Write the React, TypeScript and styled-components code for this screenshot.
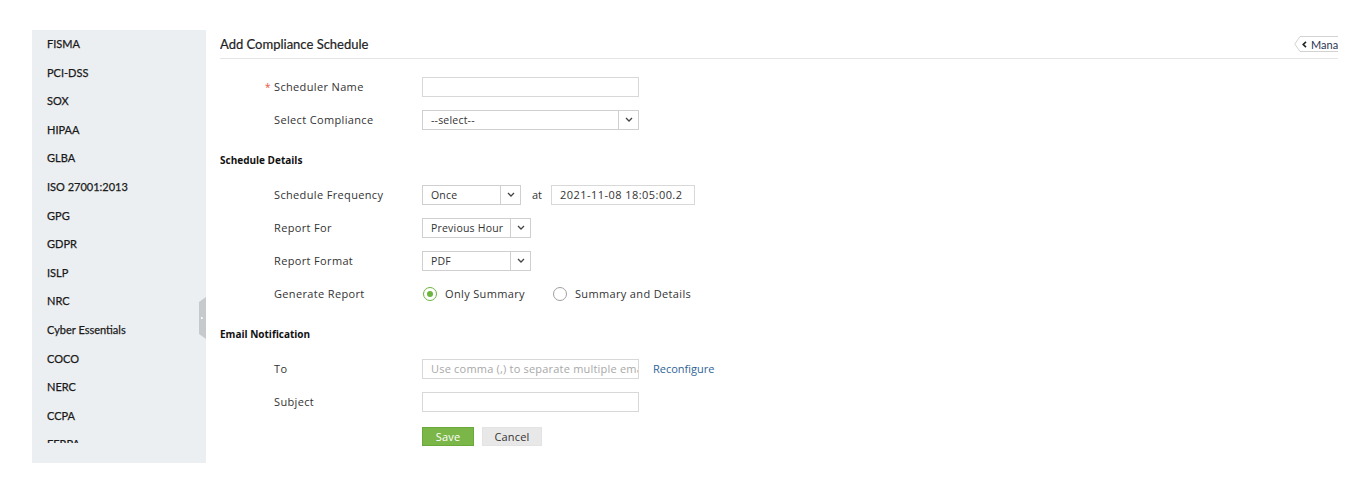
import React from 'react';
import styled, { createGlobalStyle } from 'styled-components';

const GlobalStyle = createGlobalStyle`
  html, body {
    margin: 0;
    padding: 0;
    background: #ffffff;
  }
  body {
    font-family: "Open Sans", "Liberation Sans", sans-serif;
    color: #333333;
  }
  * {
    box-sizing: border-box;
  }
`;

const Page = styled.div`
  display: flex;
  align-items: flex-start;
  gap: 14px;
  height: 494px;
  padding: 30px 32px 0;
`;

const Sidebar = styled.aside`
  position: relative;
  flex: 0 0 174px;
  height: 433px;
  padding-bottom: 20px;
  background: #eceff1;
`;

const NavList = styled.ul`
  list-style: none;
  margin: 0;
  padding: 0;
  height: 413px;
  overflow: hidden;
`;

const NavItem = styled.li`
  height: 28.6px;
  line-height: 28.6px;
  padding-left: 15px;
  font-family: Lato, "Liberation Sans", sans-serif;
  font-size: 11px;
  color: #1a1a1a;
  -webkit-text-stroke: 0.25px #1a1a1a;
  white-space: nowrap;
`;

const Handle = styled.svg`
  position: absolute;
  right: 0;
  top: 267px;
`;

const Main = styled.main`
  flex: 1;
  min-width: 0;
  overflow: hidden;
`;

const Header = styled.div`
  display: flex;
  align-items: center;
  justify-content: space-between;
  height: 29px;
  border-bottom: 1px solid #e4e4e4;
`;

const Title = styled.h1`
  margin: 0;
  font-family: Lato, "Liberation Sans", sans-serif;
  font-size: 13px;
  font-weight: 400;
  color: #1e1e1e;
  -webkit-text-stroke: 0.2px #1e1e1e;
`;

const ClipBox = styled.div`
  width: 44px;
  overflow: hidden;
  flex-shrink: 0;
`;

const BackButton = styled.div`
  position: relative;
  display: flex;
  align-items: center;
  width: 70px;
  height: 16px;
  padding-left: 8px;
  font-family: Lato, "Liberation Sans", sans-serif;
  font-size: 11px;
  color: #2a3550;
`;

const BackOutline = styled.svg`
  position: absolute;
  left: 0;
  top: 0;
`;

const BackLabel = styled.span`
  position: relative;
  display: flex;
  align-items: center;
  gap: 4px;
`;

const Form = styled.div`
  padding-top: 11px;
`;

const Row = styled.div`
  display: grid;
  grid-template-columns: 148px auto;
  align-items: center;
  height: 33px;
  padding-left: 54px;
`;

const Label = styled.label`
  font-size: 11px;
  letter-spacing: 0.35px;
  color: #333333;
`;

const Required = styled.span`
  display: inline-block;
  width: 9px;
  margin-left: -9px;
  color: #e5533d;
  font-size: 10px;
`;

const Controls = styled.div`
  display: flex;
  align-items: center;
`;

const TextInput = styled.div<{ $w: number }>`
  width: ${p => p.$w}px;
  height: 20px;
  padding: 0 8px;
  border: 1px solid #d8d8d8;
  background: #fff;
  font-size: 11px;
  letter-spacing: 0.45px;
  line-height: 18px;
  color: #333;
  white-space: nowrap;
  overflow: hidden;
`;

const Placeholder = styled.span`
  color: #a8a8a8;
  letter-spacing: 0.2px;
`;

const SelectBox = styled.div<{ $w: number }>`
  display: flex;
  width: ${p => p.$w}px;
  height: 20px;
  border: 1px solid #cfcfcf;
  background: #fff;
`;

const SelectValue = styled.span`
  flex: 1;
  padding-left: 8px;
  font-size: 10.5px;
  letter-spacing: 0.2px;
  line-height: 18px;
  color: #333;
`;

const SelectArrow = styled.span`
  display: flex;
  align-items: center;
  justify-content: center;
  width: 20px;
  border-left: 1px solid #cfcfcf;
`;

const At = styled.span`
  margin: 0 9px 0 11px;
  font-size: 11px;
  color: #333;
`;

const RadioOption = styled.label`
  display: flex;
  align-items: center;
  gap: 8px;
  margin-right: 27px;
  padding-left: 1px;
  font-size: 11px;
  letter-spacing: 0.35px;
  color: #333;
`;

const RadioCircle = styled.span<{ $checked?: boolean }>`
  display: flex;
  align-items: center;
  justify-content: center;
  width: 14px;
  height: 14px;
  border-radius: 50%;
  border: 1.5px solid ${p => (p.$checked ? '#6cb33f' : '#a0a0a0')};
  background: #fff;

  &::after {
    content: '';
    display: ${p => (p.$checked ? 'block' : 'none')};
    width: 6px;
    height: 6px;
    border-radius: 50%;
    background: #6cb33f;
  }
`;

const SectionTitle = styled.div`
  padding: 18px 0 12px;
  line-height: 12px;
  font-size: 10px;
  font-weight: 700;
  color: #111;
`;

const Link = styled.span`
  margin-left: 14px;
  font-size: 11px;
  color: #2f6496;
`;

const Actions = styled.div`
  display: flex;
  gap: 8px;
  margin-top: 9px;
  padding-left: 202px;
`;

const Button = styled.button<{ $primary?: boolean }>`
  height: 19px;
  padding: 0;
  width: ${p => (p.$primary ? '52px' : '60px')};
  border: 1px solid ${p => (p.$primary ? '#6aa83c' : '#e3e3e3')};
  background: ${p => (p.$primary ? '#7ab648' : '#e8e8e8')};
  color: ${p => (p.$primary ? '#ffffff' : '#333333')};
  font-family: "Open Sans", "Liberation Sans", sans-serif;
  font-size: 11px;
  letter-spacing: 0.2px;
  line-height: 17px;
  cursor: pointer;
`;

const Chevron = () => (
  <svg width="8" height="5" viewBox="0 0 8 5">
    <path d="M1 1l3 3 3-3" fill="none" stroke="#444" strokeWidth="1.3" />
  </svg>
);

const Select: React.FC<{ value: string; width: number }> = ({ value, width }) => (
  <SelectBox $w={width}>
    <SelectValue>{value}</SelectValue>
    <SelectArrow>
      <Chevron />
    </SelectArrow>
  </SelectBox>
);

const compliances = [
  'FISMA',
  'PCI-DSS',
  'SOX',
  'HIPAA',
  'GLBA',
  'ISO 27001:2013',
  'GPG',
  'GDPR',
  'ISLP',
  'NRC',
  'Cyber Essentials',
  'COCO',
  'NERC',
  'CCPA',
  'FERPA',
];

const App: React.FC = () => {
  return (
    <>
      <GlobalStyle />
      <Page>
        <Sidebar>
          <NavList>
            {compliances.map(name => (
              <NavItem key={name}>{name}</NavItem>
            ))}
          </NavList>
          <Handle width="7" height="42" viewBox="0 0 7 42">
            <path d="M7 0 L0 5 L0 37 L7 42 Z" fill="#c7cacc" />
            <circle cx="2.8" cy="21" r="1" fill="#ffffff" />
          </Handle>
        </Sidebar>

        <Main>
          <Header>
            <Title>Add Compliance Schedule</Title>
            <ClipBox>
              <BackButton>
                <BackOutline width="70" height="16" viewBox="0 0 70 16">
                  <path
                    d="M69.5 0.5 H6 L0.8 8 L6 15.5 H69.5"
                    fill="#fff"
                    stroke="#d2d2d2"
                    strokeWidth="1"
                  />
                </BackOutline>
                <BackLabel>
                  <svg width="5" height="7" viewBox="0 0 5 7">
                    <path d="M4 0.8 L1.2 3.5 L4 6.2" fill="none" stroke="#222" strokeWidth="1.6" />
                  </svg>
                  Manage
                </BackLabel>
              </BackButton>
            </ClipBox>
          </Header>

          <Form>
            <Row>
              <Label>
                <Required>*</Required>Scheduler Name
              </Label>
              <Controls>
                <TextInput $w={217} />
              </Controls>
            </Row>
            <Row>
              <Label>Select Compliance</Label>
              <Controls>
                <Select value="--select--" width={217} />
              </Controls>
            </Row>

            <SectionTitle>Schedule Details</SectionTitle>
            <Row>
              <Label>Schedule Frequency</Label>
              <Controls>
                <Select value="Once" width={99} />
                <At>at</At>
                <TextInput $w={144}>2021-11-08 18:05:00.2</TextInput>
              </Controls>
            </Row>
            <Row>
              <Label>Report For</Label>
              <Controls>
                <Select value="Previous Hour" width={109} />
              </Controls>
            </Row>
            <Row>
              <Label>Report Format</Label>
              <Controls>
                <Select value="PDF" width={109} />
              </Controls>
            </Row>
            <Row>
              <Label>Generate Report</Label>
              <Controls>
                <RadioOption>
                  <RadioCircle $checked />
                  Only Summary
                </RadioOption>
                <RadioOption>
                  <RadioCircle />
                  Summary and Details
                </RadioOption>
              </Controls>
            </Row>

            <SectionTitle>Email Notification</SectionTitle>
            <Row>
              <Label>To</Label>
              <Controls>
                <TextInput $w={217}>
                  <Placeholder>Use comma (,) to separate multiple emails</Placeholder>
                </TextInput>
                <Link>Reconfigure</Link>
              </Controls>
            </Row>
            <Row>
              <Label>Subject</Label>
              <Controls>
                <TextInput $w={217} />
              </Controls>
            </Row>

            <Actions>
              <Button $primary>Save</Button>
              <Button>Cancel</Button>
            </Actions>
          </Form>
        </Main>
      </Page>
    </>
  );
};

export default App;
